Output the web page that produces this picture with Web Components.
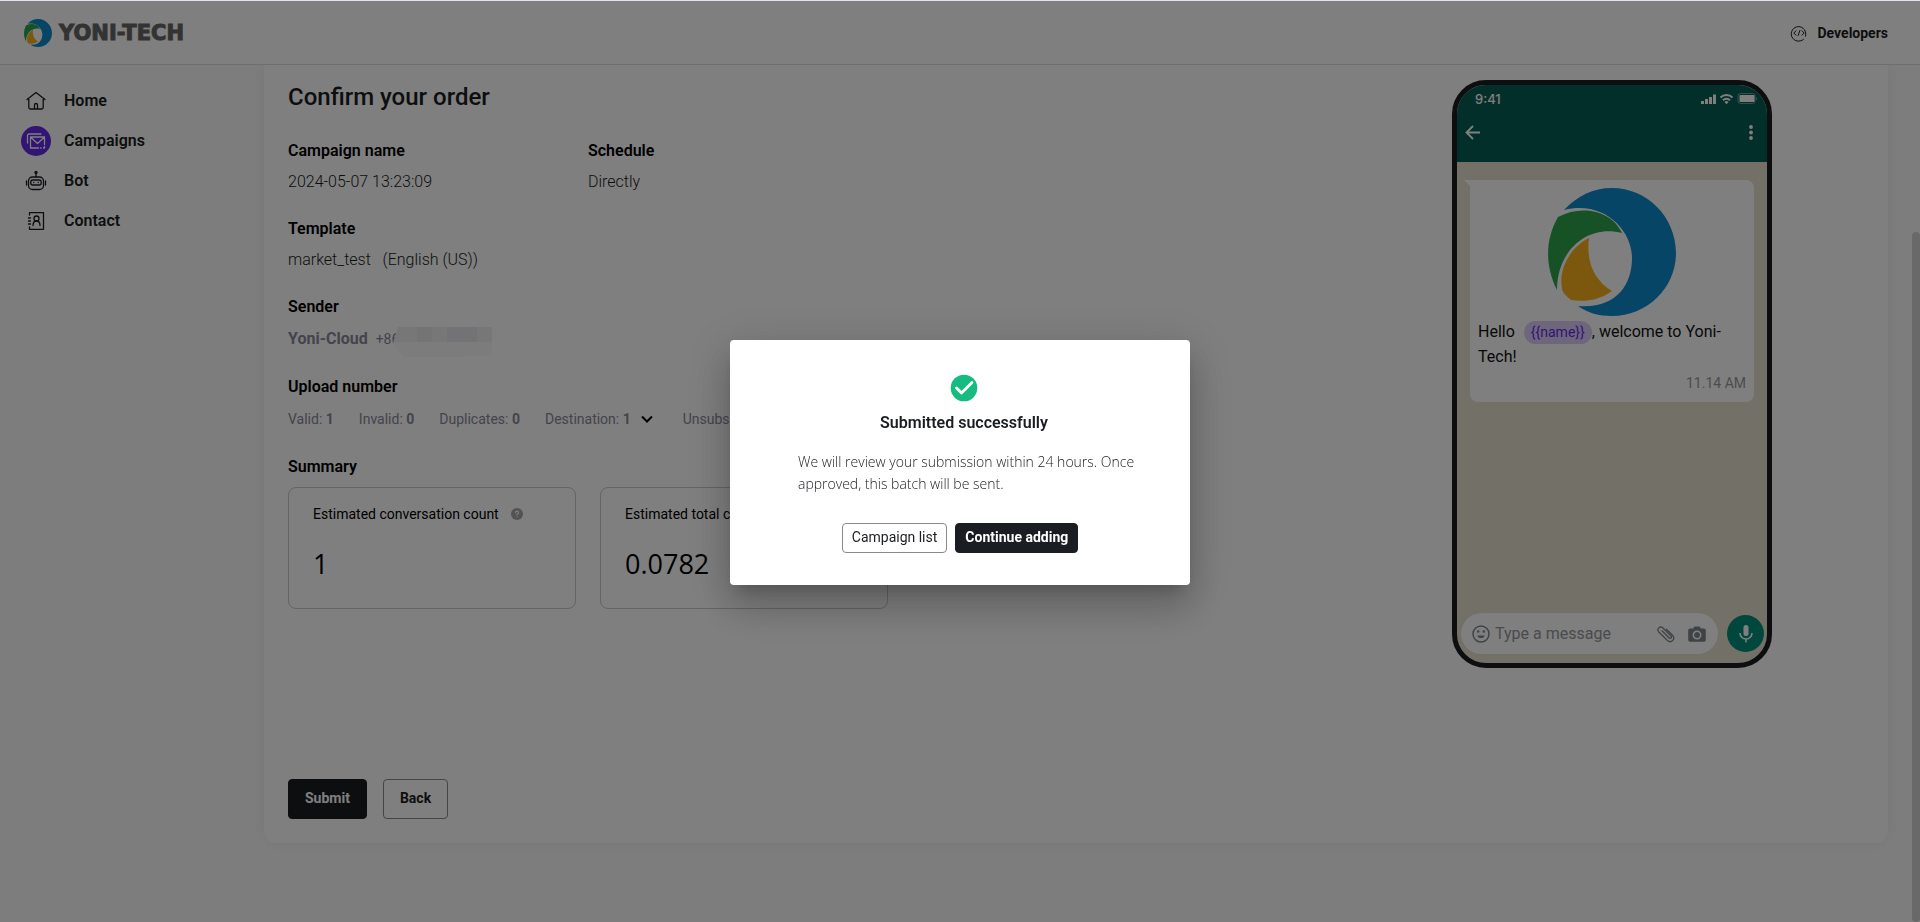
<!DOCTYPE html>
<html lang="en">
<head>
<meta charset="utf-8">
<title>Yoni-Tech</title>
<style>
  html, body {
    height: 100%;
    margin: 0;
  }
  body {
    font-family: Roboto, sans-serif;
    font-size: 16px;
    line-height: 24px;
    color: #1a1d21;
    background: #e7e0f3;
    overflow: hidden;
  }
</style>
</head>
<body>
<y-app>
  <y-topbar slot="top"></y-topbar>
  <y-sidebar slot="side"></y-sidebar>
  <y-order>
    <y-field label="Campaign name">2024-05-07 13:23:09</y-field>
    <y-field label="Schedule">Directly</y-field>
    <y-field label="Template">market_test&nbsp;&nbsp; (English (US))</y-field>
    <y-phone slot="preview"></y-phone>
  </y-order>
</y-app>
<y-dialog></y-dialog>

<script>
class YBase extends HTMLElement {
  constructor() {
    super();
    this.attachShadow({mode: 'open'});
    this.template = document.createElement('template');
  }

  connectedCallback() {
    if (this.shadowRoot.childNodes.length) return;
    this.template.innerHTML = `
      <style>
        * { box-sizing: border-box; }
        svg { display: block; }
        button { font: inherit; cursor: pointer; }
        ${this.getStyles()}
      </style>
      ${this.getMarkup()}
    `;
    this.shadowRoot.appendChild(this.template.content.cloneNode(true));
  }
}

class YApp extends YBase {
  getStyles() {
    return `
      :host { display: flex; flex-direction: column; height: 100vh; }
      .row { display: flex; flex: 1; min-height: 0; background: #fbfbfb; }
      main { flex: 1; min-width: 0; overflow: hidden; padding: 0 24px 40px 24px; }
      .track { width: 8px; padding-top: 167px; }
      .thumb { height: 100%; background: #d2d2d2; border-radius: 4px; }
    `;
  }

  getMarkup() {
    return `
      <slot name="top"></slot>
      <div class="row">
        <slot name="side"></slot>
        <main><slot></slot></main>
        <div class="track"><div class="thumb"></div></div>
      </div>
    `;
  }
}
customElements.define('y-app', YApp);

class YLogo extends YBase {
  getStyles() {
    return `
      :host { display: block; width: 28px; }
      svg { width: 100%; }
    `;
  }

  getMarkup() {
    return `
      <svg viewBox="0 0 128 128" role="img" aria-label="Yoni-Tech logo">
        <path fill="#0c8acb" d="M16 22C29 8 45 0 64 0c35 0 64 29 64 65 0 35-29 63-64 63-13 0-24-3-34-10 38 3 54-21 54-48C84 42 56 12 16 22z"/>
        <path fill="#2ea44f" d="M10 29C34 16 64 23 74 45 40 36 9 62 9 102-4 76-2 50 10 29z"/>
        <path fill="#f6b11a" d="M41 50C38 74 46 92 64 103 50 113 36 114 23 112c-6-5-9-8-9-12-4-20 10-42 27-50z"/>
      </svg>
    `;
  }
}
customElements.define('y-logo', YLogo);

class YTopbar extends YBase {
  getStyles() {
    return `
      :host {
        display: flex;
        align-items: center;
        justify-content: space-between;
        height: 65px;
        padding: 0 32px 0 24px;
        background: #fff;
        border-top: 1px solid #e7e0f3;
        border-bottom: 1px solid #dcdcdc;
        box-sizing: border-box;
      }
      a { display: flex; align-items: center; color: inherit; text-decoration: none; }
      .brand { gap: 7px; }
      .brand span {
        font-family: "DejaVu Sans", sans-serif;
        font-size: 21px;
        font-weight: 700;
        color: #666;
        -webkit-text-stroke: 1px #666;
      }
      .dev { gap: 10px; font-size: 14px; font-weight: 700; }
    `;
  }

  getMarkup() {
    return `
      <a class="brand" href="#"><y-logo></y-logo><span>YONI-TECH</span></a>
      <a class="dev" href="#">
        <svg width="18" height="18" viewBox="0 0 18 18" fill="none" stroke="#1a1d21" stroke-linecap="round">
          <path d="M13.500 15.300A7.300 7.300 0 1 1 15.500 12.200"/>
          <path d="M6 6.800 3.800 9 6 11.200M12 6.800 14.200 9 12 11.200M9.900 6.500 8.100 11.500"/>
        </svg>
        Developers
      </a>
    `;
  }
}
customElements.define('y-topbar', YTopbar);

class YSidebar extends YBase {
  getStyles() {
    return `
      :host { display: block; width: 240px; padding-top: 16px; box-sizing: border-box; }
      a {
        display: flex;
        align-items: center;
        gap: 13px;
        height: 40px;
        padding-left: 21px;
        font-weight: 600;
        color: inherit;
        text-decoration: none;
      }
      i {
        display: grid;
        place-items: center;
        width: 30px;
        height: 30px;
        border-radius: 50%;
      }
      .on i { background: #6429e8; }
      svg { fill: none; stroke: #1a1d21; stroke-linecap: round; stroke-linejoin: round; }
      .on svg { stroke: #fff; }
    `;
  }

  getMarkup() {
    return `
      <nav>
        <a href="#"><i><svg width="20" height="20" viewBox="0 0 20 20" stroke-width="1.300">
          <path d="M1 8.500 10 1.500 19 8.500M2.800 8v8.500a1.500 1.500 0 0 0 1.500 1.500h11.400a1.500 1.500 0 0 0 1.500-1.500V8M8.500 18v-4a1.500 1.500 0 0 1 3 0v4"/>
        </svg></i>Home</a>
        <a class="on" href="#"><i><svg width="20" height="20" viewBox="0 0 20 20" stroke-width="1.300">
          <path d="M1.500 12V4.500a1.500 1.500 0 0 1 1.500-1.500h12M12.500 17H4.500V6H18.500V13.500M4.500 6l7 6.500 7-6.500M14.500 17h.6M18.500 15.500V17h-1"/>
        </svg></i>Campaigns</a>
        <a href="#"><i><svg width="22" height="20" viewBox="0 0 22 20" stroke-width="1.300">
          <rect x="3.500" y="6" width="15" height="12.500" rx="4"/>
          <rect x="5.800" y="9" width="10.400" height="5" rx="2"/>
          <path d="M1.500 10v4M20.500 10v4M11 6V2M8.800 11.500h.1M13.200 11.500h.1"/>
          <circle cx="11" cy="1.500" r="1" fill="#1a1d21"/>
        </svg></i>Bot</a>
        <a href="#"><i><svg width="20" height="20" viewBox="0 0 20 20" stroke-width="1.300">
          <path d="M3.500 4V1.700h14v16.600h-14V16M2.500 7h2M2.500 10h2M2.500 13h2"/>
          <circle cx="10.500" cy="7.500" r="2.500"/>
          <path d="M7 14.500c0-6 7-6 7 0"/>
        </svg></i>Contact</a>
      </nav>
    `;
  }
}
customElements.define('y-sidebar', YSidebar);

class YField extends YBase {
  getStyles() {
    return `
      :host { display: block; }
      h3 { margin: 0 0 7px; font-size: 16px; font-weight: 600; color: #000; }
      div { font-weight: 300; color: #1a1d21; }
    `;
  }

  getMarkup() {
    return `<h3>${this.getAttribute('label')}</h3><div><slot></slot></div>`;
  }
}
customElements.define('y-field', YField);

class YStat extends YBase {
  getStyles() {
    return `
      :host {
        display: block;
        width: 288px;
        height: 122px;
        padding: 14px 24px;
        border: 1px solid #c9c9cf;
        border-radius: 8px;
        box-sizing: border-box;
      }
      .name { display: flex; align-items: center; gap: 12px; font-size: 14px; color: #000; }
      .value {
        margin-top: 18px;
        font: 500 27px/40px "Open Sans", sans-serif;
        color: #000;
      }
    `;
  }

  getMarkup() {
    return `
      <div class="name">${this.getAttribute('label')}
        <svg width="12" height="12" viewBox="0 0 12 12">
          <circle cx="6" cy="6" r="6" fill="#a6a6a6"/>
          <path d="M4.400 4.800c0-2.200 3.200-2.200 3.200-.2 0 1.200-1.600 1.200-1.600 2.400M6 8.700v.2" fill="none" stroke="#fff" stroke-width="1.100" stroke-linecap="round"/>
        </svg>
      </div>
      <div class="value"><slot></slot></div>
    `;
  }
}
customElements.define('y-stat', YStat);

class YOrder extends YBase {
  getStyles() {
    return `
      :host {
        display: flex;
        justify-content: space-between;
        min-height: 778px;
        padding: 15px 116px 24px 24px;
        background: #fff;
        border-radius: 0 0 12px 12px;
        box-shadow: 0 0 16px rgba(0, 0, 0, 0.06);
        box-sizing: border-box;
      }
      .left { display: flex; flex-direction: column; flex: 1; min-width: 0; }
      h2 { margin: 0 0 25px; font-size: 24px; line-height: 34px; font-weight: 500; }
      h3 { margin: 0; font-size: 16px; font-weight: 600; color: #000; }
      .fields { display: grid; grid-template-columns: 300px 300px; row-gap: 23px; margin-bottom: 23px; }
      .sender { display: flex; align-items: center; gap: 8px; height: 24px; margin: 8px 0 24px; color: #8a8699; }
      .sender b { font-weight: 700; }
      .sender span { font-size: 14px; }
      .phone { display: flex; align-items: center; }
      .mask { margin: 6px 0 0 -6px; }
      .counts { display: flex; gap: 25px; margin: 8px 0 24px; font-size: 14px; color: #8a8699; white-space: nowrap; }
      .counts b { font-weight: 700; }
      .dest { display: flex; align-items: center; gap: 10px; padding: 0 5px 0 0; border: 0; background: none; color: inherit; }
      .stats { display: flex; gap: 24px; margin-top: 8px; }
      .actions { display: flex; gap: 16px; margin-top: auto; }
      .actions button {
        height: 40px;
        padding: 0 16px 2px;
        border: 1px solid #8a8a8a;
        border-radius: 4px;
        background: #fff;
        color: #1a1d21;
        font-size: 14px;
        font-weight: 700;
      }
      .actions .dark { background: #1a1d21; border-color: #1a1d21; color: #fff; }
    `;
  }

  getMarkup() {
    return `
      <section class="left">
        <h2>Confirm your order</h2>
        <div class="fields"><slot></slot></div>
        <h3>Sender</h3>
        <div class="sender">
          <b>Yoni-Cloud</b>
          <div class="phone">
            <span>+86</span>
            <svg class="mask" width="100" height="30" viewBox="0 0 100 30">
              <path fill="#f9f9fa" d="M5 0H99V28L70 30H10L0 17Z"/>
              <path fill="#eeeef0" d="M5 0H99V15H1Z"/>
              <path fill="#e6e6ea" d="M54 0h30v15H54z"/>
              <path fill="#e9e9eb" d="M24 0h15v15H24z"/>
            </svg>
          </div>
        </div>
        <h3>Upload number</h3>
        <div class="counts">
          <span>Valid: <b>1</b></span>
          <span>Invalid: <b>0</b></span>
          <span>Duplicates: <b>0</b></span>
          <button class="dest"><span>Destination: <b>1</b></span>
            <svg width="12" height="8" viewBox="0 0 12 8" fill="none" stroke="#000" stroke-width="2"><path d="M1 1.500 6 6.500 11 1.500"/></svg>
          </button>
          <span>Unsubscribed: <b>0</b></span>
        </div>
        <h3>Summary</h3>
        <div class="stats">
          <y-stat label="Estimated conversation count">1</y-stat>
          <y-stat label="Estimated total cost">0.0782</y-stat>
        </div>
        <div class="actions">
          <button class="dark">Submit</button>
          <button>Back</button>
        </div>
      </section>
      <slot name="preview"></slot>
    `;
  }
}
customElements.define('y-order', YOrder);

class YPhone extends YBase {
  getStyles() {
    return `
      :host {
        display: flex;
        flex-direction: column;
        width: 320px;
        height: 588px;
        border: 5px solid #1a1d21;
        border-radius: 34px;
        overflow: hidden;
        background: #e7e0cf;
        box-sizing: border-box;
      }
      .head { height: 77px; padding: 4px 9px 0 8px; background: #075e54; color: #fff; }
      .status, .nav { display: flex; align-items: center; justify-content: space-between; }
      .status { padding-left: 10px; font-size: 13px; font-weight: 500; font-family: Inter, sans-serif; line-height: 20px; }
      .nav { margin-top: 16px; }
      .nav button { padding: 0; border: 0; background: none; }
      .bubble {
        position: relative;
        margin: 18px 13px 0;
        padding: 8px;
        background: #fff;
        border-radius: 0 8px 8px 8px;
      }
      .tail { position: absolute; top: 0; left: -6px; }
      y-logo { width: 128px; margin: 0 auto; }
      p { margin: 3px 0 0; line-height: 25px; color: #111; }
      p span {
        display: inline-block;
        margin-left: 5px;
        padding: 0 7px;
        border-radius: 12px;
        background: #dccdfb;
        color: #6429e8;
        font-size: 14px;
        line-height: 23px;
      }
      time { display: block; margin-top: 3px; font-size: 14px; line-height: 22px; text-align: right; color: #999; }
      .compose { display: flex; align-items: center; justify-content: space-between; margin: auto 3px 9px 4px; }
      .box { display: flex; align-items: center; width: 257px; height: 41px; padding: 0 12px 0 11px; gap: 5px; border-radius: 21px; background: #fff; }
      input { flex: 1; min-width: 0; padding: 0; border: 0; outline: 0; background: none; font: 16px/24px Roboto, sans-serif; }
      input::placeholder { color: #92979b; opacity: 1; }
      .box svg + svg { margin-left: 8px; }
      .mic { display: grid; place-items: center; width: 37px; height: 37px; padding: 0; border: 0; border-radius: 50%; background: #00907a; }
    `;
  }

  getMarkup() {
    return `
      <div class="head">
        <div class="status">
          <span>9:41</span>
          <svg width="57" height="12" viewBox="0 0 57 12">
            <path fill="#fff" d="M0 8h3v3H0zM4 6h3v5H4zM8 4h3v7H8zM12 1.500h3V11h-3z"/>
            <path fill="none" stroke="#fff" stroke-width="2" d="M19.500 4.500a8.500 8.500 0 0 1 12 0M22 7.300a5 5 0 0 1 7 0"/>
            <path fill="#fff" d="M23.500 9a3 3 0 0 1 4 0l-2 2.200z"/>
            <rect x="37" y=".5" width="17" height="10" rx="2.500" fill="none" stroke="#fff" opacity=".4"/>
            <rect x="38.500" y="2" width="15" height="7" rx="1" fill="#fff"/>
            <path fill="#fff" opacity=".4" d="M55 4c1.500.5 1.500 3 0 3.500z"/>
          </svg>
        </div>
        <div class="nav">
          <button aria-label="Back"><svg width="15" height="15" viewBox="0 0 15 15" fill="none" stroke="#fff" stroke-width="1.800"><path d="M15 7.500H1.500M8 1 1.500 7.500 8 14"/></svg></button>
          <button aria-label="More"><svg width="14" height="15" viewBox="0 0 14 15" fill="#fff"><circle cx="7" cy="2" r="1.900"/><circle cx="7" cy="7.500" r="1.900"/><circle cx="7" cy="13" r="1.900"/></svg></button>
        </div>
      </div>
      <div class="bubble">
        <svg class="tail" width="7" height="6" viewBox="0 0 7 6"><path fill="#fff" d="M0 0h7v6H6z"/></svg>
        <y-logo></y-logo>
        <p>Hello <span>{{name}}</span>, welcome to Yoni-<br>Tech!</p>
        <time>11.14 AM</time>
      </div>
      <div class="compose">
        <div class="box">
          <svg width="18" height="18" viewBox="0 0 18 18" fill="none" stroke="#7f868b" stroke-width="1.500">
            <circle cx="9" cy="9" r="8"/>
            <path d="M5.200 10.500h7.600c-1 3.400-6.600 3.400-7.600 0z" fill="#7f868b" stroke="none"/>
            <circle cx="6.200" cy="6.500" r=".6"/><circle cx="11.800" cy="6.500" r=".6"/>
          </svg>
          <input type="text" placeholder="Type a message" aria-label="Message">
          <svg width="18" height="18" viewBox="0 0 18 18" fill="none" stroke="#7f868b" stroke-width="1.300" stroke-linecap="round">
            <path d="M5 5.800l7 7c1.500 1.500 3.200-.5 2-1.800L6 3C3 .3-.8 4 1.800 7l8.400 8.300c4 3.700 8.800-1.300 5.300-5L9.500 4.300"/>
          </svg>
          <svg width="18" height="16" viewBox="0 0 18 16">
            <path fill="#7f868b" d="M2 2.500h3L6.500.5h5L13 2.500h3a1.800 1.800 0 0 1 1.800 1.800V14a1.800 1.800 0 0 1-1.800 1.800H2A1.800 1.800 0 0 1 .2 14V4.300A1.800 1.800 0 0 1 2 2.500z"/>
            <circle cx="9" cy="9" r="3.700" fill="none" stroke="#fff" stroke-width="1.500"/>
          </svg>
        </div>
        <button class="mic" aria-label="Record">
          <svg width="14" height="19" viewBox="0 0 14 19">
            <rect x="4.500" y="1" width="5" height="11" rx="2.500" fill="#fff"/>
            <path d="M1 9a6 6 0 0 0 12 0M7 15v3.500" fill="none" stroke="#fff" stroke-width="1.600"/>
          </svg>
        </button>
      </div>
    `;
  }
}
customElements.define('y-phone', YPhone);

class YDialog extends YBase {
  getStyles() {
    return `
      :host {
        position: fixed;
        inset: 1px 0 0 0;
        z-index: 10;
        display: grid;
        place-items: center;
        padding-top: 2px;
        background: rgba(0, 0, 0, 0.5);
        box-sizing: border-box;
      }
      .card {
        display: flex;
        flex-direction: column;
        align-items: center;
        width: 460px;
        padding: 34px 0 32px;
        background: #fff;
        border-radius: 4px;
        box-shadow: 0 11px 15px -7px rgba(0, 0, 0, 0.2), 0 24px 38px 3px rgba(0, 0, 0, 0.14), 0 9px 46px 8px rgba(0, 0, 0, 0.12);
      }
      .text { display: flex; flex-direction: column; align-items: center; margin-left: 8px; }
      h2 { margin: 9px 0 16px; font-size: 16px; font-weight: 600; line-height: 24px; }
      p { width: 348px; margin: 0 0 28px; padding-left: 8px; font: 300 14px/22px "Open Sans", sans-serif; color: #1a1d21; }
      .buttons { display: flex; gap: 8px; }
      button {
        height: 30px;
        padding: 0 9px 2px;
        border: 1px solid #8a8a8a;
        border-radius: 4px;
        background: #fff;
        color: #1a1d21;
        font-size: 14px;
        font-weight: 400;
      }
      .dark { background: #1a1d21; border-color: #1a1d21; color: #fff; font-weight: 700; }
    `;
  }

  getMarkup() {
    return `
      <div class="card" role="dialog" aria-labelledby="title">
        <div class="text">
          <svg width="28" height="28" viewBox="0 0 28 28">
            <circle cx="14" cy="14" r="13.300" fill="#16bb81"/>
            <path d="M6.500 14 11.500 19 22 8.500" fill="none" stroke="#fff" stroke-width="2.800" stroke-linecap="round" stroke-linejoin="round"/>
          </svg>
          <h2 id="title">Submitted successfully</h2>
          <p>We will review your submission within 24 hours. Once approved, this batch will be sent.</p>
        </div>
        <div class="buttons">
          <button>Campaign list</button>
          <button class="dark">Continue adding</button>
        </div>
      </div>
    `;
  }
}
customElements.define('y-dialog', YDialog);
</script>
</body>
</html>
